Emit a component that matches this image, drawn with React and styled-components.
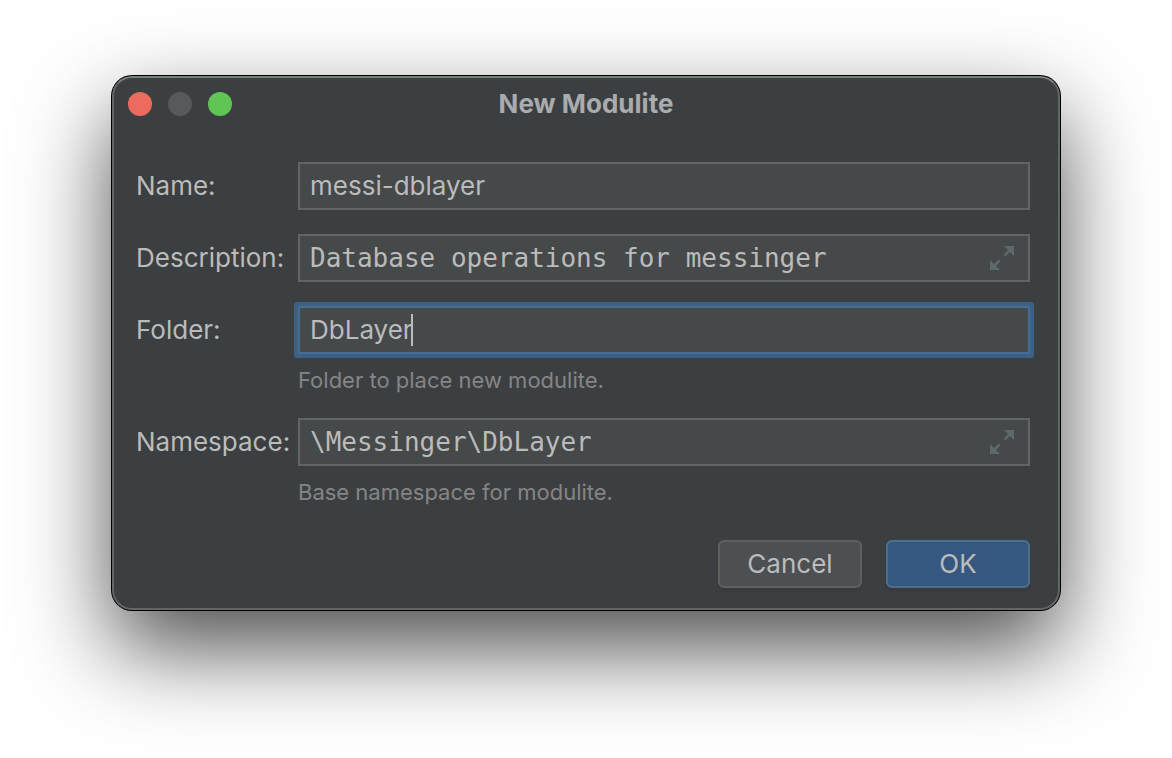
import React, { useState } from 'react';
import styled, { createGlobalStyle, css } from 'styled-components';

const GlobalStyle = createGlobalStyle`
  *, *::before, *::after { box-sizing: border-box; }
  body {
    margin: 0;
    background: #ffffff;
    color: #bbbbbb;
    font-family: Inter, "Liberation Sans", sans-serif;
    font-size: 26px;
    line-height: 32px;
    overflow-x: hidden;
  }
`;

const Desktop = styled.main`
  min-height: 100vh;
  padding: 76px 112px 0;
  overflow: hidden;
`;

const Dialog = styled.section`
  background: #3c3f41;
  border: 2px solid #646666;
  border-top-color: #7c7e7e;
  border-radius: 20px;
  box-shadow: 0 0 0 1px #000000, 0 38px 90px rgba(0, 0, 0, 0.7);
`;

const TitleBar = styled.header`
  display: grid;
  grid-template-columns: 1fr auto 1fr;
  align-items: center;
  height: 52px;
  padding: 0 14px;
`;

const Lights = styled.div`
  display: flex;
  gap: 16px;
`;

const Light = styled.button`
  width: 24px;
  height: 24px;
  padding: 0;
  border: 0;
  border-radius: 50%;
  background: ${(p) => p.$color};
`;

const Title = styled.h1`
  margin: 0;
  color: #a9abac;
  font-size: 26px;
  font-weight: 700;
  line-height: 32px;
`;

const Form = styled.form`
  padding: 32px 28px 20px 22px;
`;

const Fields = styled.div`
  display: flex;
  flex-direction: column;
  gap: 24px;
`;

const Row = styled.div`
  display: grid;
  grid-template-columns: 162px 1fr;
  align-items: center;
`;

const Label = styled.label`
  white-space: nowrap;
`;

const Field = styled.div`
  display: flex;
  align-items: center;
  height: 48px;
  padding: 0 14px 0 10px;
  background: #45494a;
  border: 2px solid #646464;
  ${(p) =>
    p.$active &&
    css`
      border-color: #466d94;
      border-radius: 1px;
      box-shadow: 0 0 0 4px #3d6185;
    `}
`;

const Input = styled.input`
  flex: ${(p) => (p.$hug ? '0 1 auto' : '1')};
  field-sizing: ${(p) => (p.$hug ? 'content' : 'fixed')};
  min-width: 0;
  height: 32px;
  padding: 0;
  border: 0;
  outline: 0;
  background: transparent;
  color: #bbbbbb;
  font-family: ${(p) =>
    p.$mono ? '"DejaVu Sans Mono", monospace' : 'Inter, "Liberation Sans", sans-serif'};
  font-size: 26px;
  line-height: 32px;
  caret-color: ${(p) => (p.$hug ? 'transparent' : 'auto')};
`;

const Caret = styled.span`
  width: 2px;
  height: 32px;
  margin-left: -2px;
  background: #bbbbbb;
`;

const ExpandButton = styled.button`
  display: flex;
  padding: 0;
  border: 0;
  background: transparent;
  color: #5f686d;
`;

const Hint = styled.p`
  grid-column: 2;
  margin: 0;
  padding-top: 12px;
  color: #858585;
  font-size: 22px;
  line-height: 28px;
`;

const Actions = styled.footer`
  display: flex;
  justify-content: flex-end;
  gap: 24px;
  padding-top: 34px;
`;

const Button = styled.button`
  width: 144px;
  height: 48px;
  padding: 0;
  border: 2px solid ${(p) => (p.$primary ? '#4c708c' : '#5e6060')};
  border-radius: 6px;
  background: ${(p) => (p.$primary ? '#365880' : '#4c5052')};
  box-shadow: 0 3px 2px rgba(54, 54, 54, 0.6);
  color: #bbbbbb;
  font: inherit;
`;

function ExpandIcon() {
  return (
    <svg width="24" height="24" viewBox="0 0 24 24" aria-hidden="true">
      <path d="M14 0h10v10zM0 14v10h10z" fill="currentColor" />
      <path d="M20 4l-5.5 5.5M4 20l5.5-5.5" stroke="currentColor" strokeWidth="2.6" />
    </svg>
  );
}

function FormRow({ id, label, initial, mono, active, expandable, hint }) {
  const [value, setValue] = useState(initial);
  return (
    <Row>
      <Label htmlFor={id}>{label}</Label>
      <Field $active={active}>
        <Input
          id={id}
          type="text"
          spellCheck={false}
          value={value}
          onChange={(e) => setValue(e.target.value)}
          $mono={mono}
          $hug={active}
        />
        {active && <Caret />}
        {expandable && (
          <ExpandButton type="button" aria-label={`Expand ${id}`}>
            <ExpandIcon />
          </ExpandButton>
        )}
      </Field>
      {hint && <Hint>{hint}</Hint>}
    </Row>
  );
}

export default function App() {
  return (
    <>
      <GlobalStyle />
      <Desktop>
        <Dialog role="dialog" aria-labelledby="dialog-title">
          <TitleBar>
            <Lights>
              <Light type="button" aria-label="Close" $color="#ed6a5e" />
              <Light type="button" aria-label="Minimize" disabled $color="#565a5c" />
              <Light type="button" aria-label="Zoom" $color="#61c554" />
            </Lights>
            <Title id="dialog-title">New Modulite</Title>
          </TitleBar>
          <Form onSubmit={(e) => e.preventDefault()}>
            <Fields>
              <FormRow id="name" label="Name:" initial="messi-dblayer" />
              <FormRow
                id="description"
                label="Description:"
                initial="Database operations for messinger"
                mono
                expandable
              />
              <FormRow
                id="folder"
                label="Folder:"
                initial="DbLayer"
                active
                hint="Folder to place new modulite."
              />
              <FormRow
                id="namespace"
                label="Namespace:"
                initial={'\\Messinger\\DbLayer'}
                mono
                expandable
                hint="Base namespace for modulite."
              />
            </Fields>
            <Actions>
              <Button type="button">Cancel</Button>
              <Button type="submit" $primary>OK</Button>
            </Actions>
          </Form>
        </Dialog>
      </Desktop>
    </>
  );
}
